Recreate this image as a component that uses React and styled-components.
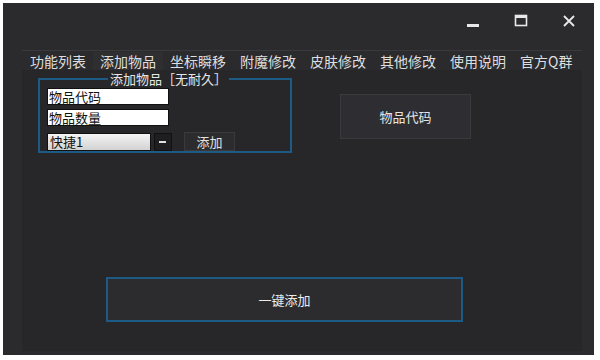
import React from 'react';
import styled, { createGlobalStyle } from 'styled-components';

const GlobalStyle = createGlobalStyle`
  html, body {
    margin: 0;
    padding: 0;
    background: #ffffff;
  }
  body {
    font-family: "Noto Sans CJK SC", "Noto Sans", sans-serif;
  }
`;

const Window = styled.div`
  box-sizing: border-box;
  margin: 3px 0 0 3px;
  width: 591px;
  height: 352px;
  background: #2b2b2e;
  display: flex;
  flex-direction: column;
  color: #e6e6e6;
`;

const TitleBar = styled.div`
  height: 47px;
  display: flex;
  justify-content: flex-end;
  align-items: flex-start;
  padding: 8px 1px 0 0;
  box-sizing: border-box;
`;

const WinButton = styled.div`
  width: 48px;
  height: 20px;
  display: flex;
  align-items: center;
  justify-content: center;
`;

const Tabs = styled.div`
  margin: 0 12px 0 19px;
  padding-left: 1px;
  height: 19px;
  display: flex;
  align-items: center;
  border-top: 1px solid #3a3a3e;
`;

const Tab = styled.div`
  font-size: 14px;
  line-height: 18px;
  padding: 0 7px;
  color: #dedede;
  background: ${p => (p.$active ? '#2f2f32' : 'transparent')};
  white-space: nowrap;
`;

const Panel = styled.div`
  flex: 1;
  margin: 0 12px 4px 19px;
  background: #272729;
  padding: 2px 0 0 16px;
  display: flex;
  flex-direction: column;
`;

const TopRow = styled.div`
  display: flex;
  align-items: flex-start;
`;

const GroupBox = styled.fieldset`
  box-sizing: border-box;
  width: 254px;
  height: 81px;
  margin: 0;
  border: 2px solid #1d5a86;
  padding: 3px 0 0 7px;
  display: flex;
  flex-direction: column;
  gap: 4px;
`;

const Legend = styled.legend`
  font-size: 13px;
  line-height: 13px;
  color: #e6e6e6;
  padding: 0 2px;
  margin: 0 auto;
`;

const TextBox = styled.div`
  box-sizing: border-box;
  width: 122px;
  height: 17px;
  background: #ffffff;
  border: 1px solid #111;
  color: #111;
  font-size: 13px;
  line-height: 15px;
  padding-left: 1px;
`;

const ComboRow = styled.div`
  display: flex;
  align-items: center;
  margin-top: 2px;
`;

const Combo = styled.div`
  box-sizing: border-box;
  width: 104px;
  height: 18px;
  background: linear-gradient(#f4f4f4, #d2d2d2);
  border: 1px solid #111;
  color: #111;
  font-size: 13px;
  line-height: 16px;
  padding-left: 2px;
`;

const DropBtn = styled.div`
  box-sizing: border-box;
  width: 18px;
  height: 18px;
  margin-left: 3px;
  background: #1e1e20;
  border: 1px solid #111;
  display: flex;
  align-items: center;
  justify-content: center;
`;

const SmallButton = styled.div`
  box-sizing: border-box;
  width: 51px;
  height: 19px;
  margin-left: 12px;
  background: #2c2c2f;
  border: 1px solid #3a3a3d;
  font-size: 13px;
  line-height: 17px;
  text-align: center;
  color: #e2e2e2;
`;

const BigButton = styled.div`
  box-sizing: border-box;
  width: 131px;
  height: 45px;
  margin: 22px 0 0 48px;
  background: #2e2e32;
  border: 1px solid #3a3a3e;
  display: flex;
  align-items: center;
  justify-content: center;
  font-size: 13px;
  color: #e6e6e6;
`;

const WideButton = styled.div`
  box-sizing: border-box;
  width: 357px;
  height: 45px;
  margin: 124px 0 0 68px;
  background: #2c2c2f;
  border: 2px solid #1d5a86;
  display: flex;
  align-items: center;
  justify-content: center;
  font-size: 13px;
  color: #ededed;
`;

const tabs = ['功能列表', '添加物品', '坐标瞬移', '附魔修改', '皮肤修改', '其他修改', '使用说明', '官方Q群'];

export default function App() {
  return (
    <>
      <GlobalStyle />
      <Window>
        <TitleBar>
          <WinButton>
            <svg width="14" height="14" viewBox="0 0 14 14">
              <rect x="1" y="10" width="12" height="3" fill="#e8e8e8" />
            </svg>
          </WinButton>
          <WinButton>
            <svg width="14" height="14" viewBox="0 0 14 14">
              <rect x="1.5" y="1.5" width="11" height="10" fill="none" stroke="#e8e8e8" strokeWidth="1.6" />
              <rect x="1" y="1" width="12" height="3" fill="#e8e8e8" />
            </svg>
          </WinButton>
          <WinButton>
            <svg width="14" height="14" viewBox="0 0 14 14">
              <path d="M2 2 L12 12 M12 2 L2 12" stroke="#e8e8e8" strokeWidth="1.8" />
            </svg>
          </WinButton>
        </TitleBar>
        <Tabs>
          {tabs.map((t, i) => (
            <Tab key={t} $active={i === 1}>{t}</Tab>
          ))}
        </Tabs>
        <Panel>
          <TopRow>
            <GroupBox>
              <Legend>添加物品［无耐久］</Legend>
              <TextBox>物品代码</TextBox>
              <TextBox>物品数量</TextBox>
              <ComboRow>
                <Combo>快捷1</Combo>
                <DropBtn>
                  <svg width="8" height="4" viewBox="0 0 8 4">
                    <rect x="0" y="1" width="7" height="2" fill="#e0e0e0" />
                  </svg>
                </DropBtn>
                <SmallButton>添加</SmallButton>
              </ComboRow>
            </GroupBox>
            <BigButton>物品代码</BigButton>
          </TopRow>
          <WideButton>一键添加</WideButton>
        </Panel>
      </Window>
    </>
  );
}
